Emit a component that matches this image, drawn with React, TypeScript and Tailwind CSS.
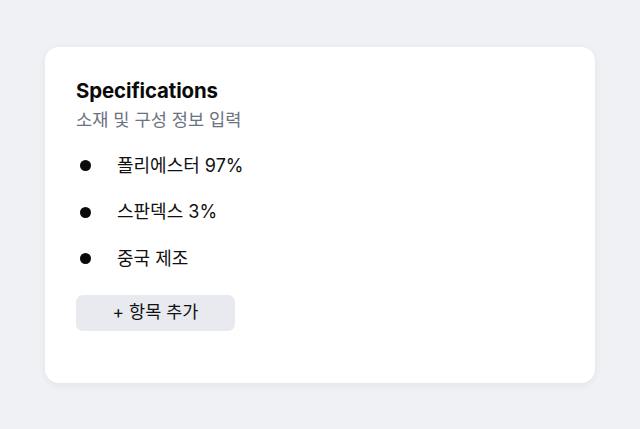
import React from "react";

const items = ["폴리에스터 97%", "스판덱스 3%", "중국 제조"];

export default function App() {
  return (
    <div
      className="w-[640px] h-[429px] bg-[#eff1f5] flex items-center justify-center"
      style={{ fontFamily: 'Inter, "Noto Sans CJK KR", sans-serif' }}
    >
      <div className="w-[550px] h-[336px] bg-white rounded-[14px] shadow-[0_2px_8px_rgba(0,0,0,0.06)] pl-[31px] pr-[30px] pt-[30px] flex flex-col">
        <h2 className="text-[20.4px] leading-[28px] font-bold text-[#0a0a0a] tracking-[-0.1px]">
          Specifications
        </h2>
        <p className="text-[17.6px] leading-[24px] text-[#6b7280] mt-[3px]">
          소재 및 구성 정보 입력
        </p>
        <ul className="mt-[20px] flex flex-col gap-[18.5px]">
          {items.map((t) => (
            <li key={t} className="flex items-center h-[28px]">
              <span className="w-[11px] h-[11px] rounded-full bg-[#0a0a0a] ml-[4px] mr-[26px]" />
              <span className="text-[18px] leading-[28px] text-[#111111]">{t}</span>
            </li>
          ))}
        </ul>
        <button className="mt-[22px] w-[159px] h-[36px] rounded-[7px] bg-[#e8eaef] text-[17.5px] font-normal text-[#111111] flex items-center justify-center">
          + 항목 추가
        </button>
      </div>
    </div>
  );
}
